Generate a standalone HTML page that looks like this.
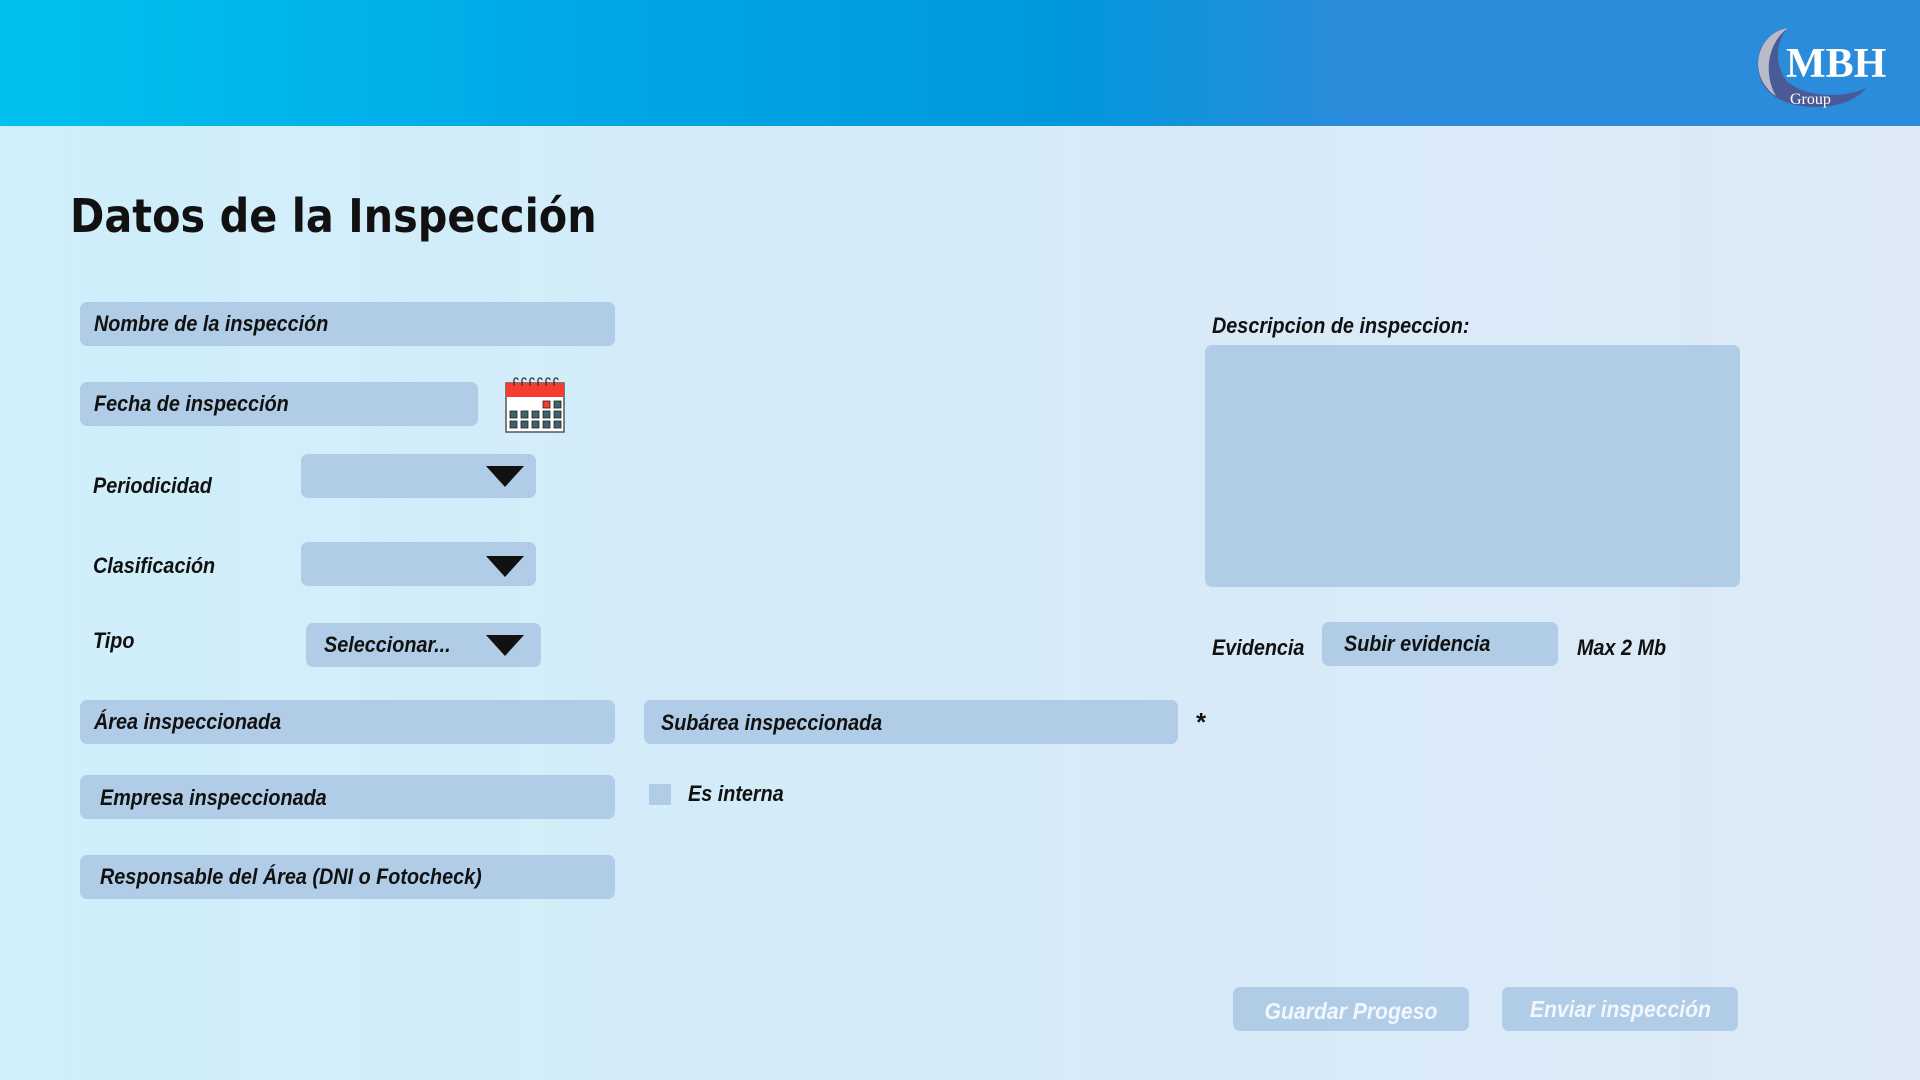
<!DOCTYPE html>
<html><head><meta charset="utf-8"><style>
*{margin:0;padding:0;box-sizing:border-box}
body{width:1920px;height:1080px;overflow:hidden;position:relative;background:linear-gradient(90deg,#cfeffb 0%,#d6ebf8 50%,#dde9f7 100%);font-family:"Liberation Sans",sans-serif}
.hdr{position:absolute;left:0;top:0;width:1920px;height:126px;background:linear-gradient(90deg,#00c1ef 0%,#00a9e6 30%,#0098dc 55%,#2a8cdb 70%,#2a8cdb 100%)}
.f{position:absolute;background:#b0cce6;border-radius:7px;height:44px;font-style:italic;font-weight:bold;font-size:22px;color:#111;line-height:44px;padding-left:14px;white-space:nowrap}
.l{position:absolute;font-style:italic;font-weight:bold;font-size:22px;color:#111;white-space:nowrap}
span.n{display:inline-block;transform:scaleX(0.9);transform-origin:left center}
.tri{position:absolute;right:12px;top:12px;width:0;height:0;border-left:19px solid transparent;border-right:19px solid transparent;border-top:21px solid #111}
.b{position:absolute;background:#b0cce6;border-radius:7px;height:44px;width:236px;font-style:italic;font-weight:bold;font-size:23px;color:#f2f7fd;line-height:44px;text-align:center;white-space:nowrap}
.b span{display:inline-block;transform:scaleX(0.92)}
h1{position:absolute;left:70px;top:189px;font-family:"DejaVu Sans","Liberation Sans",sans-serif;font-weight:bold;font-size:46px;color:#111;transform:scaleX(0.9);transform-origin:left top;white-space:nowrap}
</style></head><body>
<div class="hdr"></div>
<svg style="position:absolute;left:1750px;top:24px" width="150" height="88" viewBox="0 0 150 88">
<path d="M38 4 C10 8 0 40 14 62 C24 78 52 86 80 82 C100 79 112 70 116 64 C90 76 50 72 36 56 C24 40 26 16 38 4Z" fill="#4a5a96"/>
<path d="M38 4 C12 8 0 38 14 60 C18 66 22 70 26 72 C14 52 16 20 38 4Z" fill="#b8bcc6"/>
<text x="36" y="53" font-family="Liberation Serif,serif" font-weight="bold" font-size="42" fill="#fff">MBH</text>
<text x="40" y="80" font-family="Liberation Serif,serif" font-size="16" fill="#fff">Group</text>
</svg>
<h1>Datos de la Inspección</h1>
<div class="f" style="left:80px;top:302px;width:535px"><span class="n">Nombre de la inspección</span></div>
<div class="f" style="left:80px;top:382px;width:398px"><span class="n">Fecha de inspección</span></div>
<svg style="position:absolute;left:505px;top:376px" width="62" height="58" viewBox="0 0 62 58">
<rect x="1" y="7" width="58" height="49" fill="#fff" stroke="#555" stroke-width="1.5"/>
<rect x="1" y="7" width="58" height="14" fill="#f63c2e"/>
<g fill="none" stroke="#333" stroke-width="1.3"><path d="M9 10v-6a2 2 0 0 1 4 0"/><path d="M17 10v-6a2 2 0 0 1 4 0"/><path d="M25 10v-6a2 2 0 0 1 4 0"/><path d="M33 10v-6a2 2 0 0 1 4 0"/><path d="M41 10v-6a2 2 0 0 1 4 0"/><path d="M49 10v-6a2 2 0 0 1 4 0"/></g>
<g fill="#3f636b" stroke="#222" stroke-width="0.8">
<rect x="38" y="25" width="7" height="7" fill="#f63c2e"/><rect x="49" y="25" width="7" height="7"/>
<rect x="5" y="35" width="7" height="7"/><rect x="16" y="35" width="7" height="7"/><rect x="27" y="35" width="7" height="7"/><rect x="38" y="35" width="7" height="7"/><rect x="49" y="35" width="7" height="7"/>
<rect x="5" y="45" width="7" height="7"/><rect x="16" y="45" width="7" height="7"/><rect x="27" y="45" width="7" height="7"/><rect x="38" y="45" width="7" height="7"/><rect x="49" y="45" width="7" height="7"/></g>
</svg>
<div class="l" style="left:93px;top:473px"><span class="n">Periodicidad</span></div>
<div class="f" style="left:301px;top:454px;width:235px"><div class="tri"></div></div>
<div class="l" style="left:93px;top:553px"><span class="n">Clasificación</span></div>
<div class="f" style="left:301px;top:542px;width:235px"><div class="tri" style="top:14px"></div></div>
<div class="l" style="left:93px;top:628px"><span class="n">Tipo</span></div>
<div class="f" style="left:306px;top:623px;width:235px;padding-left:18px"><span class="n">Seleccionar...</span><div class="tri" style="right:17px"></div></div>
<div class="f" style="left:80px;top:700px;width:535px"><span class="n">Área inspeccionada</span></div>
<div class="f" style="left:644px;top:700px;width:534px;padding-left:17px;line-height:46px"><span class="n">Subárea inspeccionada</span></div>
<div class="l" style="left:1195px;top:707px;font-size:26px">*</div>
<div class="f" style="left:80px;top:775px;width:535px;padding-left:20px;line-height:46px"><span class="n">Empresa inspeccionada</span></div>
<div style="position:absolute;left:649px;top:784px;width:22px;height:21px;background:#b0cce6"></div>
<div class="l" style="left:688px;top:781px"><span class="n">Es interna</span></div>
<div class="f" style="left:80px;top:855px;width:535px;padding-left:20px"><span class="n">Responsable del Área (DNI o Fotocheck)</span></div>
<div class="l" style="left:1212px;top:313px"><span class="n">Descripcion de inspeccion:</span></div>
<div style="position:absolute;left:1205px;top:345px;width:535px;height:242px;background:#b0cce6;border-radius:7px"></div>
<div class="l" style="left:1212px;top:635px"><span class="n">Evidencia</span></div>
<div class="f" style="left:1322px;top:622px;width:236px;padding-left:22px"><span class="n">Subir evidencia</span></div>
<div class="l" style="left:1577px;top:635px"><span class="n">Max 2 Mb</span></div>
<div class="b" style="left:1233px;top:987px;line-height:48px"><span>Guardar Progeso</span></div>
<div class="b" style="left:1502px;top:987px"><span>Enviar inspección</span></div>
</body></html>
